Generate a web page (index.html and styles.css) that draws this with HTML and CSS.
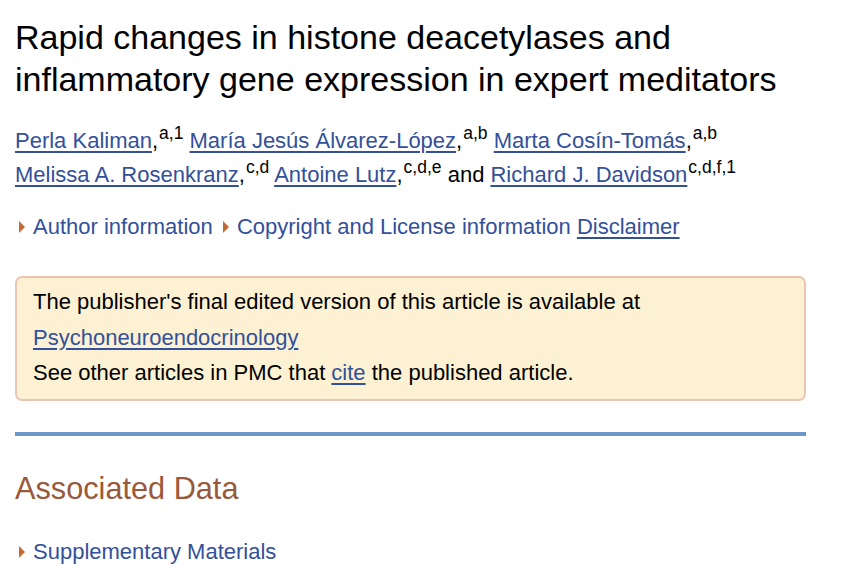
FILE: index.html
```html
<!DOCTYPE html>
<html>
<head>
<meta charset="utf-8">
<link rel="stylesheet" href="styles.css">
</head>
<body>
<main class="page">
  <h1 class="title">Rapid changes in histone deacetylases and<br>inflammatory gene expression in expert meditators</h1>
  <div class="authors">
    <a href="#">Perla Kaliman</a>,<sup>a,1</sup> <a href="#">María Jesús Álvarez-López</a>,<sup>a,b</sup> <a href="#">Marta Cosín-Tomás</a>,<sup>a,b</sup><br>
    <a href="#">Melissa A. Rosenkranz</a>,<sup>c,d</sup> <a href="#">Antoine Lutz</a>,<sup>c,d,e</sup> and <a href="#">Richard J. Davidson</a><sup>c,d,f,1</sup>
  </div>
  <div class="info">
    <span class="toggle">Author information</span> <span class="toggle">Copyright and License information</span> <a href="#">Disclaimer</a>
  </div>
  <div class="notice">
    <div>The publisher's final edited version of this article is available at</div>
    <div><a href="#">Psychoneuroendocrinology</a></div>
    <div>See other articles in PMC that <a href="#">cite</a> the published article.</div>
  </div>
  <hr class="rule">
  <h2 class="section">Associated Data</h2>
  <div class="supp"><span class="toggle">Supplementary Materials</span></div>
</main>
</body>
</html>
```

FILE: styles.css
```css
html, body {
  margin: 0;
  padding: 0;
  background: #ffffff;
}
body {
  font-family: "Liberation Sans", Arial, sans-serif;
  color: #000000;
}
.page {
  padding: 16px 44px 0 15px;
  width: 791px;
}
a {
  color: #33509a;
  text-decoration: underline;
  text-underline-offset: 3px;
  text-decoration-thickness: 2px;
}
.title {
  font-weight: normal;
  font-size: 34px;
  line-height: 42px;
  margin: 0 0 24px 0;
  white-space: nowrap;
}
.authors {
  font-size: 22px;
  line-height: 34px;
  white-space: nowrap;
}
.authors sup {
  font-size: 17.5px;
  line-height: 0;
  vertical-align: 0;
  position: relative;
  top: -9px;
  margin-left: 1px;
}
.info {
  margin-top: 23px;
  font-size: 22px;
  line-height: 24px;
  color: #33509a;
  white-space: nowrap;
}
.toggle {
  color: #33509a;
}
.toggle::before {
  content: "";
  display: inline-block;
  width: 0;
  height: 0;
  border-top: 6px solid transparent;
  border-bottom: 6px solid transparent;
  border-left: 6px solid #c66a34;
  margin: 0 8px 0 4px;
  vertical-align: 1px;
}
.notice {
  margin-top: 37px;
  background: #fdf1d3;
  border: 2px solid #eac6b2;
  border-radius: 7px;
  padding: 6px 16px 8px 16px;
  font-size: 22px;
  line-height: 35.5px;
}
.rule {
  border: 0;
  height: 4px;
  background: #6b98c9;
  margin: 31px 0 0 0;
}
.section {
  font-weight: normal;
  font-size: 30.7px;
  color: #99593a;
  margin: 35px 0 0 0;
  line-height: 36px;
}
.supp {
  margin-top: 33px;
  font-size: 22px;
  line-height: 24px;
}
```
